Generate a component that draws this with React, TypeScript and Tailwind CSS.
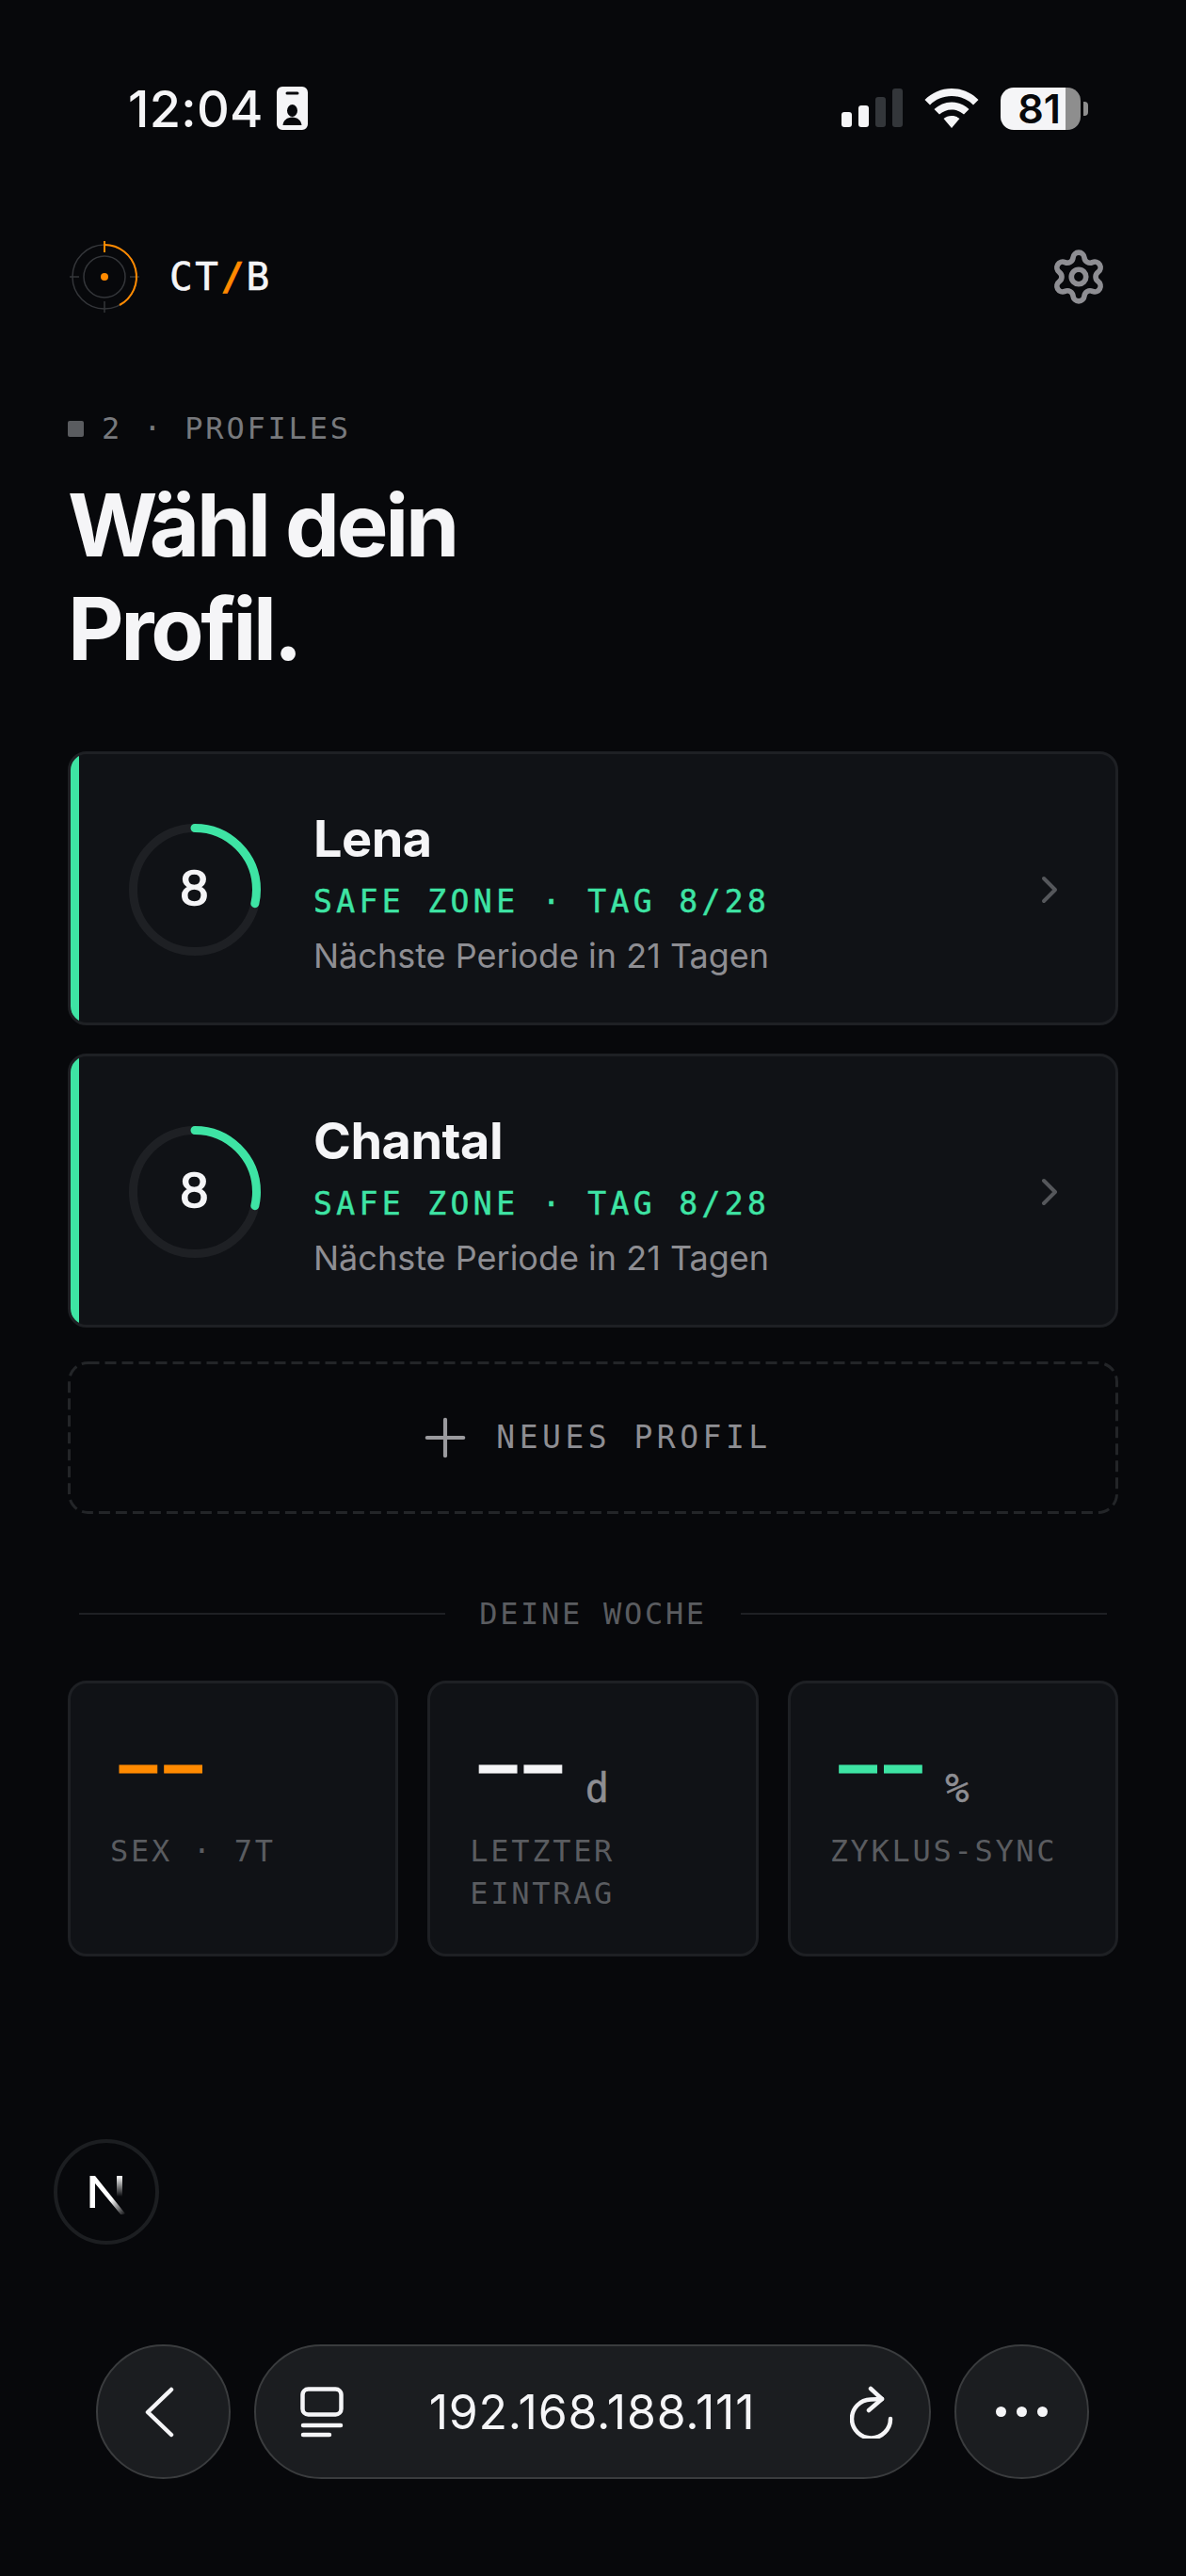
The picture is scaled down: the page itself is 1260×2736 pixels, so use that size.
import React from "react";
import { Settings, ChevronRight, Plus } from "lucide-react";

function Ring({ n }: { n: string }) {
  const r = 65.5;
  const c = 2 * Math.PI * r;
  return (
    <div className="relative w-[140px] h-[140px] shrink-0 ml-[53px] flex items-center justify-center">
      <svg width="140" height="140" viewBox="0 0 140 140" className="absolute inset-0 -rotate-90">
        <circle cx="70" cy="70" r={r} fill="none" stroke="#1e2024" strokeWidth="9" />
        <circle cx="70" cy="70" r={r} fill="none" stroke="#3ee4a4" strokeWidth="9" strokeLinecap="round" strokeDasharray={`${c * (8 / 28)} ${c}`} />
      </svg>
      <span className="font-['Liberation_Mono',monospace] text-[54px] leading-none text-[#f5f5f7] relative mt-[4px] -ml-[1px] [-webkit-text-stroke:1.5px_#f5f5f7]">{n}</span>
    </div>
  );
}

function ProfileCard({ name }: { name: string }) {
  return (
    <div className="flex items-center h-[291px] pt-[2px] rounded-[20px] border-[3px] border-[#1e2024] bg-[#101216] overflow-hidden">
      <div className="w-[9px] -mt-[2px] self-stretch bg-[#3ee4a4]" />
      <Ring n="8" />
      <div className="ml-[56px] mt-[9px] flex-1 flex flex-col">
        <div className="font-['Inter',sans-serif] font-bold text-[54px] leading-[64px] text-[#f5f5f7] tracking-[-0.5px]">{name}</div>
        <div className="font-['DejaVu_Sans_Mono',monospace] text-[33px] leading-[44px] mt-[13px] tracking-[4.4px] text-[#3ee4a4] [-webkit-text-stroke:0.5px_#3ee4a4]">SAFE ZONE · TAG 8/28</div>
        <div className="font-['Inter',sans-serif] text-[36px] leading-[48px] mt-[11px] text-[#8e8e93]">Nächste Periode in 21 Tagen</div>
      </div>
      <ChevronRight size={48} strokeWidth={2} color="#55575b" className="mr-[46px]" />
    </div>
  );
}

function Stat({ color, unit, label }: { color: string; unit?: string; label: React.ReactNode }) {
  return (
    <div className="flex-1 h-[293px] rounded-[20px] border-[3px] border-[#1e2024] bg-[#101216] pl-[42px] pt-[38px]">
      <div className="flex items-end h-[98px]">
        <span style={{ color, WebkitTextStroke: `1px ${color}` }} className="ml-[10px] font-['DejaVu_Sans_Mono',monospace] font-bold text-[66px] leading-[98px] tracking-[8px]">––</span>
        {unit && <span className="font-['DejaVu_Sans_Mono',monospace] text-[42px] leading-[48px] text-[#8e8e93] ml-[17px] [-webkit-text-stroke:0.5px_#8e8e93]">{unit}</span>}
      </div>
      <div className="font-['DejaVu_Sans_Mono',monospace] text-[32px] leading-[45px] tracking-[2.7px] text-[#5a5c60] mt-[20px]">{label}</div>
    </div>
  );
}

function Logo() {
  return (
    <svg width="74" height="76" viewBox="0 0 74 76">
      <circle cx="37" cy="38" r="34" fill="none" stroke="#34363a" strokeWidth="1.5" />
      <circle cx="37" cy="38" r="22" fill="none" stroke="#34363a" strokeWidth="1.5" />
      <path d="M0 38H10M64 38H74M37 64V76" stroke="#34363a" strokeWidth="1.5" />
      <path d="M37 4A34 34 0 0 1 53 68" fill="none" stroke="#ff8a00" strokeWidth="2" />
      <path d="M37 0V12" stroke="#ff8a00" strokeWidth="2" />
      <circle cx="37" cy="38" r="4" fill="#ff8a00" />
    </svg>
  );
}

export default function App() {
  return (
    <div className="w-[1260px] h-[2736px] bg-[#07080b] flex flex-col overflow-hidden font-['Inter',sans-serif]">
      {/* status bar */}
      <div className="flex items-center h-[46px] mt-[92px] pl-[136px]">
        <span className="font-['Inter',sans-serif] font-medium text-[54px] leading-none text-[#f5f5f7] mt-[2px] tracking-[0.3px]">12:04</span>
        <svg width="33" height="46" viewBox="0 0 33 46" className="ml-[14px]">
          <path fillRule="evenodd" fill="#f5f5f7" d="M6 0H27A6 6 0 0 1 33 6V40A6 6 0 0 1 27 46H6A6 6 0 0 1 0 40V6A6 6 0 0 1 6 0ZM11 5.500A1 1 0 0 0 11 8.500H22A1 1 0 0 0 22 5.500ZM16.500 19A5.500 6.500 0 0 0 16.500 32A5.500 6.500 0 0 0 16.500 19ZM16.500 32.500C11 32.500 7 36 6.500 41H26.500C26 36 22 32.500 16.500 32.500Z" />
        </svg>
        <div className="ml-auto flex items-end h-[46px] gap-[7px] pb-[3px]">
          <div className="w-[11px] h-[16px] rounded-[3px] bg-[#f5f5f7]" />
          <div className="w-[11px] h-[23px] rounded-[3px] bg-[#f5f5f7]" />
          <div className="w-[11px] h-[32px] rounded-[3px] bg-[#33363a]" />
          <div className="w-[11px] h-[41px] rounded-[3px] bg-[#33363a]" />
        </div>
        <svg width="58" height="42" viewBox="0 0 58 42" className="ml-[23px]">
          <path fill="#f5f5f7" d="M29 0C18 0 8 4.500 0.500 12L6 17.500C12 11.500 20 8 29 8C38 8 46 11.500 52 17.500L57.500 12C50 4.500 40 0 29 0Z" />
          <path fill="#f5f5f7" d="M29 14.500C22 14.500 15.500 17.500 10.500 22L16 27.500C19.500 24.500 24 22.500 29 22.500C34 22.500 38.500 24.500 42 27.500L47.500 22C42.500 17.500 36 14.500 29 14.500Z" />
          <path fill="#f5f5f7" d="M29 29C25.500 29 23 30 20.500 32L29 42L37.500 32C35 30 32.500 29 29 29Z" />
        </svg>
        <div className="ml-[23px] flex items-center mr-[104px]">
          <div className="w-[69px] h-[45px] rounded-l-[14px] bg-[#f5f5f7] flex items-center justify-end pr-[5px]">
            <span className="font-['Inter',sans-serif] font-semibold text-[43px] leading-[45px] text-[#07080b]">81</span>
          </div>
          <div className="w-[16px] h-[45px] rounded-r-[14px] bg-[#8e8e8e]" />
          <div className="w-[5px] h-[15px] ml-[3px] rounded-r-[4px] bg-[#8e8e8e]" />
        </div>
      </div>

      {/* header */}
      <div className="flex items-center h-[76px] mt-[118px] pl-[74px] pr-[83px]">
        <Logo />
        <div className="ml-[32px] font-['DejaVu_Sans_Mono',monospace] text-[41px] leading-none tracking-[2.500px] text-[#f5f5f7] [-webkit-text-stroke:0.6px_#f5f5f7]">
          CT<span className="text-[#ff8a00] font-bold [-webkit-text-stroke:0.6px_#ff8a00]">/</span>B
        </div>
        <Settings size={62} strokeWidth={2.2} color="#8e8e93" className="ml-auto" />
      </div>

      {/* label + title */}
      <div className="flex items-center h-[30px] mt-[108px] ml-[72px]">
        <div className="w-[17px] h-[17px] rounded-[2px] bg-[#5a5c60]" />
        <span className="ml-[19px] font-['DejaVu_Sans_Mono',monospace] text-[32px] leading-[30px] tracking-[2.8px] text-[#77797d]">2 · PROFILES</span>
      </div>
      <h1 className="ml-[72px] mt-[33px] font-['Inter',sans-serif] font-bold text-[92px] leading-[110px] tracking-[-3.300px] text-[#f5f5f7]">
        Wähl dein<br />Profil.
      </h1>

      {/* cards */}
      <div className="mx-[72px] mt-[75px] flex flex-col gap-[30px]">
        <ProfileCard name="Lena" />
        <ProfileCard name="Chantal" />
      </div>
      <div className="relative mx-[72px] mt-[36px] h-[162px] flex items-center justify-center gap-[21px]">
        <svg width="1116" height="162" viewBox="0 0 1116 162" fill="none" className="absolute inset-0">
          <rect x="1.500" y="1.500" width="1113" height="159" rx="20" stroke="#232528" strokeWidth="3" strokeDasharray="12 6" />
        </svg>
        <Plus size={66} strokeWidth={1.5} color="#9a9a9e" />
        <span className="font-['DejaVu_Sans_Mono',monospace] text-[33px] tracking-[4.5px] text-[#8e8e93]">NEUES PROFIL</span>
      </div>

      {/* divider */}
      <div className="flex items-center mt-[86px] ml-[84px] mr-[84px] h-[40px] gap-[36px]">
        <div className="flex-1 h-[2px] bg-[#1e2024]" />
        <span className="font-['DejaVu_Sans_Mono',monospace] text-[32px] leading-[40px] tracking-[2.7px] text-[#5a5c60]">DEINE WOCHE</span>
        <div className="flex-1 h-[2px] bg-[#1e2024]" />
      </div>

      {/* stats */}
      <div className="mx-[72px] mt-[51px] flex gap-[31px]">
        <Stat color="#ff8a00" label="SEX · 7T" />
        <Stat color="#f5f5f7" unit="d" label={<>LETZTER<br />EINTRAG</>} />
        <Stat color="#3ee4a4" unit="%" label="ZYKLUS-SYNC" />
      </div>

      {/* next badge */}
      <div className="mt-[194px] ml-[57px] w-[112px] h-[112px] rounded-full border-[4px] border-[#1c1e21] bg-[#07080b] flex items-center justify-center">
        <svg width="48" height="48" viewBox="0 0 48 48">
          <defs>
            <linearGradient id="nv" x1="0" y1="0" x2="0" y2="1">
              <stop offset="0" stopColor="#fff" />
              <stop offset="1" stopColor="#fff" stopOpacity="0" />
            </linearGradient>
            <linearGradient id="nd" x1="0" y1="0" x2="1" y2="1">
              <stop offset="0.6" stopColor="#fff" />
              <stop offset="1" stopColor="#fff" stopOpacity="0" />
            </linearGradient>
          </defs>
          <path d="M6.500 7H12L44 47L40 49L12 15V41H6.500Z" fill="url(#nd)" />
          <rect x="35" y="7" width="6" height="22" fill="url(#nv)" />
        </svg>
      </div>

      {/* browser bar */}
      <div className="mt-[106px] ml-[102px] mr-[103px] flex gap-[25px] h-[143px]">
        <div className="w-[143px] rounded-full bg-[#1b1d20] border-[2px] border-[#3a3c3e] flex items-center justify-center">
          <svg width="32" height="54" viewBox="0 0 32 54" fill="none" stroke="#f5f5f7" strokeWidth="4.500" strokeLinecap="round" strokeLinejoin="round" className="mr-[10px]">
            <path d="M29 3L4 27L29 51" />
          </svg>
        </div>
        <div className="flex-1 rounded-full bg-[#1b1d20] border-[2px] border-[#3a3c3e] flex items-center pl-[47px] pr-[38px]">
          <svg width="46" height="54" viewBox="0 0 46 54" fill="none" stroke="#f5f5f7" strokeWidth="4.500" strokeLinecap="round" strokeLinejoin="round">
            <rect x="2.500" y="2.500" width="41" height="27" rx="6" />
            <path d="M3 41H43M3 51H31" />
          </svg>
          <span className="flex-1 text-center pr-[10px] font-['Inter',sans-serif] text-[50px] leading-none text-[#f5f5f7] tracking-[0.75px]">192.168.188.111</span>
          <svg width="46" height="56" viewBox="0 0 46 56" fill="none" stroke="#f5f5f7" strokeWidth="4.500" strokeLinecap="round" strokeLinejoin="round">
            <path d="M43 35A20.500 20.500 0 1 1 22 14.500L34 14" />
            <path d="M22 3L34 14L20 26" />
          </svg>
        </div>
        <div className="w-[143px] rounded-full bg-[#1b1d20] border-[2px] border-[#3a3c3e] flex items-center justify-center gap-[11px]">
          <div className="w-[11px] h-[11px] rounded-full bg-[#f5f5f7]" />
          <div className="w-[11px] h-[11px] rounded-full bg-[#f5f5f7]" />
          <div className="w-[11px] h-[11px] rounded-full bg-[#f5f5f7]" />
        </div>
      </div>
    </div>
  );
}
